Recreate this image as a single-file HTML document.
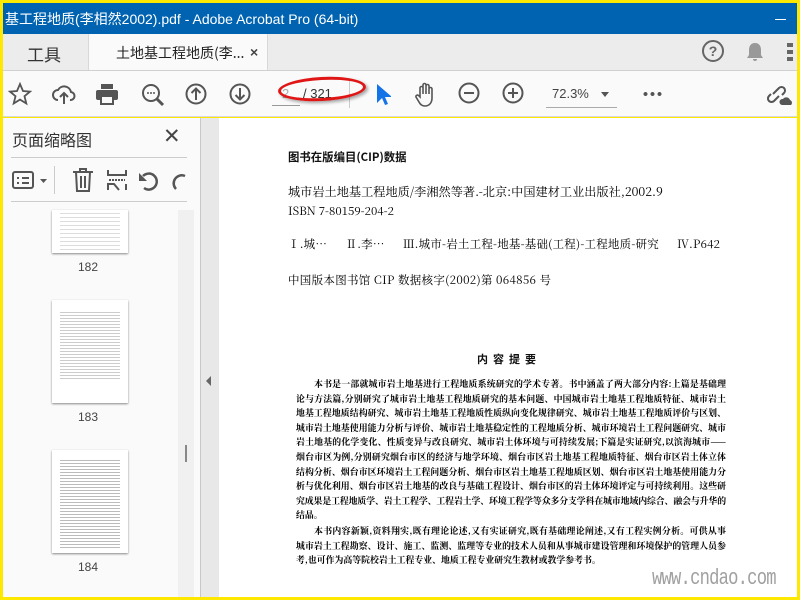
<!DOCTYPE html><html><head><meta charset="utf-8"><style>
*{margin:0;padding:0;box-sizing:border-box}
body{width:800px;height:600px;overflow:hidden;background:#ffe800;position:relative;font-family:"Liberation Sans","Noto Sans CJK SC",sans-serif}
.a{position:absolute}
.t{font-family:"Noto Sans CJK SC",sans-serif}
.p{font-family:"Noto Serif CJK SC","Noto Sans CJK SC",serif;color:#000}
.b div{height:14.6px;line-height:14.6px;white-space:nowrap;text-align:justify;text-align-last:justify}
.b div.l{text-align-last:left}
svg{position:absolute}
</style></head><body>
<div class="a" style="left:3px;top:3px;width:794px;height:31px;background:#0063b1"></div>
<div class="a" style="left:5px;top:9px;color:#fff;font-size:14px;white-space:nowrap">基工程地质(李相然2002).pdf - Adobe Acrobat Pro (64-bit)</div>
<div class="a" style="left:775px;top:19px;width:11px;height:1px;background:#fff"></div>
<div class="a" style="left:3px;top:34px;width:794px;height:36px;background:#ececec"></div>
<div class="a t" style="left:27px;top:41px;font-size:17px;color:#333">工具</div>
<div class="a" style="left:88px;top:34px;width:180px;height:37px;background:#fafafa;border-left:1px solid #d8d8d8;border-right:1px solid #d8d8d8"></div>
<div class="a t" style="left:116px;top:43px;font-size:14px;color:#222">土地基工程地质(李...</div>
<div class="a" style="left:250px;top:44px;font-size:14px;color:#444;font-weight:bold">×</div>
<svg style="left:702px;top:40px" width="22" height="22"><circle cx="11" cy="11" r="10" fill="none" stroke="#666" stroke-width="2"/><text x="11" y="16" font-size="14" text-anchor="middle" fill="#666" font-weight="bold" font-family="Liberation Sans">?</text></svg>
<svg style="left:745px;top:42px" width="20" height="20"><path d="M10 1c-4 0-6 3-6 7v5l-2 3h16l-2-3V8c0-4-2-7-6-7zM8 17h4a2 2 0 0 1-4 0z" fill="#999"/></svg>
<div class="a" style="left:787px;top:43px;width:6px;height:18px;background:repeating-linear-gradient(#666 0 4px,transparent 4px 7px)"></div>
<div class="a" style="left:3px;top:70px;width:794px;height:47px;background:#fafafa;border-top:1px solid #d0d0d0;border-bottom:1px solid #d8d8d8"></div>
<svg style="left:8px;top:82px" width="24" height="24"><path d="M12 2l3 7 7 .6-5.5 4.6 1.8 7.3L12 17.6 5.7 21.5l1.8-7.3L2 9.6 9 9z" fill="none" stroke="#555" stroke-width="1.8"/></svg>
<svg style="left:52px;top:84px" width="24" height="22"><path d="M6 16a5 5 0 0 1 0-10 7 7 0 0 1 13 2 4 4 0 0 1-1 8" fill="none" stroke="#555" stroke-width="2"/><path d="M12 20V10M8 13l4-4 4 4" fill="none" stroke="#555" stroke-width="2"/></svg>
<svg style="left:95px;top:83px" width="24" height="22"><rect x="6" y="1" width="12" height="5" fill="#555"/><rect x="1" y="7" width="22" height="10" rx="2" fill="#555"/><rect x="6" y="13" width="12" height="8" fill="#fafafa" stroke="#555" stroke-width="2"/></svg>
<svg style="left:141px;top:83px" width="24" height="24"><circle cx="10" cy="10" r="8" fill="none" stroke="#555" stroke-width="2"/><path d="M16 16l6 6" stroke="#555" stroke-width="3"/><circle cx="7" cy="10" r="1" fill="#555"/><circle cx="10" cy="10" r="1" fill="#555"/><circle cx="13" cy="10" r="1" fill="#555"/></svg>
<svg style="left:185px;top:83px" width="22" height="22"><circle cx="11" cy="11" r="9.5" fill="none" stroke="#555" stroke-width="2"/><path d="M11 17V6M6.5 10L11 5.5 15.5 10" fill="none" stroke="#555" stroke-width="2"/></svg>
<svg style="left:229px;top:83px" width="22" height="22"><circle cx="11" cy="11" r="9.5" fill="none" stroke="#555" stroke-width="2"/><path d="M11 5v11M6.5 12L11 16.5 15.5 12" fill="none" stroke="#555" stroke-width="2"/></svg>
<div class="a" style="left:272px;top:105px;width:28px;height:1px;background:#999"></div>
<div class="a" style="left:282px;top:86px;font-size:13px;color:#aaa">2</div>
<div class="a" style="left:303px;top:86px;font-size:13px;color:#333">/ 321</div>
<div class="a" style="left:349px;top:80px;width:1px;height:28px;background:#ccc"></div>
<div class="a" style="left:278px;top:77px;width:88px;height:24px;border:3px solid #e01515;border-radius:50%;transform:rotate(-3deg);box-shadow:2px 2px 3px rgba(0,0,0,.35)"></div>
<svg style="left:375px;top:83px" width="16" height="24"><path d="M2 1v19l5-5 3 7 3-1-3-7h7z" fill="#1473e6"/></svg>
<svg style="left:414px;top:82px" width="24" height="26"><path d="M6 15V6a1.5 1.5 0 0 1 3 0v6V3a1.5 1.5 0 0 1 3 0v9V4a1.5 1.5 0 0 1 3 0v8V7a1.5 1.5 0 0 1 3 0v9c0 5-3 8-7 8-3 0-5-2-6-4l-3-5a1.5 1.5 0 0 1 2.5-1.5z" fill="none" stroke="#555" stroke-width="1.6"/></svg>
<svg style="left:458px;top:82px" width="22" height="22"><circle cx="11" cy="11" r="9.5" fill="none" stroke="#555" stroke-width="2"/><path d="M6 11h10" stroke="#555" stroke-width="2"/></svg>
<svg style="left:502px;top:82px" width="22" height="22"><circle cx="11" cy="11" r="9.5" fill="none" stroke="#555" stroke-width="2"/><path d="M6 11h10M11 6v10" stroke="#555" stroke-width="2"/></svg>
<div class="a" style="left:552px;top:86px;font-size:13px;color:#444">72.3%</div>
<div class="a" style="left:601px;top:92px;border:4px solid transparent;border-top:5px solid #555"></div>
<div class="a" style="left:546px;top:107px;width:71px;height:1px;background:#aaa"></div>
<div class="a" style="left:642px;top:92px;width:20px;height:4px;background:radial-gradient(circle,#555 1.8px,transparent 2.2px) 0 0/7px 4px"></div>
<svg style="left:767px;top:82px" width="28" height="24"><path d="M6 12l6-6a3.5 3.5 0 0 1 5 5l-2 2M12 14l-5 5a3.5 3.5 0 0 1-5-5l2-2" fill="none" stroke="#555" stroke-width="2"/><path d="M15 23a3 3 0 0 1 1-6 4 4 0 0 1 7 1 3 3 0 0 1 1 5z" fill="#555"/></svg>
<!-- left panel -->
<div class="a" style="left:3px;top:118px;width:197px;height:479px;background:#fafafa"></div>
<div class="a t" style="left:12px;top:127px;font-size:16px;color:#333">页面缩略图</div>
<div class="a" style="left:163px;top:124px;font-size:21px;color:#444">✕</div>
<div class="a" style="left:11px;top:157px;width:176px;height:1px;background:#ccc"></div>
<div class="a" style="left:11px;top:201px;width:176px;height:1px;background:#ccc"></div>
<svg style="left:12px;top:171px" width="36" height="20"><rect x="1" y="1" width="20" height="16" rx="2" fill="none" stroke="#555" stroke-width="2"/><path d="M5 7h2M10 7h7M5 12h2M10 12h7" stroke="#555" stroke-width="2"/><path d="M28 8h7l-3.5 4z" fill="#555"/></svg>
<div class="a" style="left:54px;top:166px;width:1px;height:28px;background:#ccc"></div>
<svg style="left:72px;top:168px" width="22" height="24"><path d="M1 4h20M8 4V1h6v3M4 4l1 19h12l1-19M9 8v12M13 8v12" fill="none" stroke="#555" stroke-width="2"/></svg>
<svg style="left:106px;top:170px" width="22" height="22"><path d="M2 0v5h18V0M2 20v-6h6l5 6M20 14v6" fill="none" stroke="#555" stroke-width="2"/><path d="M3 10h16" stroke="#555" stroke-width="2" stroke-dasharray="2 1"/></svg>
<svg style="left:138px;top:170px" width="24" height="22"><path d="M6 18a8 8 0 1 0-1-12" fill="none" stroke="#555" stroke-width="2.5"/><path d="M1 3v8h8z" fill="#555"/></svg>
<svg style="left:172px;top:170px" width="15" height="22"><path d="M13 6a8 8 0 0 0-10 3 8 8 0 0 0 1 10" fill="none" stroke="#555" stroke-width="2.5"/></svg>
<div class="a" style="left:178px;top:210px;width:16px;height:387px;background:#f0f0f0"></div>
<div class="a" style="left:185px;top:445px;width:2px;height:17px;background:#888"></div>
<div class="a" style="left:52px;top:210px;width:76px;height:43px;background:#fff;box-shadow:0 1px 2px #888;background-image:repeating-linear-gradient(transparent 0 3px,#ddd 3px 4px);background-size:60px 100%;background-repeat:no-repeat;background-position:8px 0"></div>
<div class="a" style="left:78px;top:260px;font-size:12px;color:#444">182</div>
<div class="a" style="left:52px;top:300px;width:76px;height:103px;background:#fff;box-shadow:0 1px 2px #888;background-image:repeating-linear-gradient(transparent 0 2px,#ccc 2px 3px);background-size:60px 70px;background-repeat:no-repeat;background-position:8px 10px"></div>
<div class="a" style="left:78px;top:410px;font-size:12px;color:#444">183</div>
<div class="a" style="left:52px;top:450px;width:76px;height:103px;background:#fff;box-shadow:0 1px 2px #888;background-image:repeating-linear-gradient(transparent 0 2px,#bbb 2px 3px);background-size:60px 90px;background-repeat:no-repeat;background-position:8px 8px"></div>
<div class="a" style="left:78px;top:560px;font-size:12px;color:#444">184</div>
<div class="a" style="left:200px;top:118px;width:1px;height:479px;background:#c8c8c8"></div>
<div class="a" style="left:201px;top:118px;width:18px;height:479px;background:#e8e8e8"></div>
<div class="a" style="left:206px;top:376px;border:5px solid transparent;border-right:5px solid #666;border-left:0"></div>
<div class="a" style="left:219px;top:118px;width:578px;height:479px;background:#fff"></div>
<!-- page -->
<div class="a t" style="left:288px;top:149px;font-size:11.4px;font-weight:bold;color:#111">图书在版编目(CIP)数据</div>
<div class="a p" style="left:288px;top:183px;font-size:12.2px;white-space:nowrap">城市岩土地基工程地质/李湘然等著.-北京:中国建材工业出版社,2002.9</div>
<div class="a p" style="left:288px;top:203px;font-size:11.5px">ISBN 7-80159-204-2</div>
<div class="a p" style="left:288px;top:236px;font-size:11.5px;white-space:nowrap;word-spacing:3px;letter-spacing:.2px">Ⅰ.城…&nbsp;&nbsp;&nbsp;Ⅱ.李…&nbsp;&nbsp;&nbsp;Ⅲ.城市-岩土工程-地基-基础(工程)-工程地质-研究&nbsp;&nbsp;&nbsp;Ⅳ.P642</div>
<div class="a p" style="left:288px;top:272px;font-size:11.5px;white-space:nowrap;letter-spacing:.3px">中国版本图书馆 CIP 数据核字(2002)第 064856 号</div>
<div class="a t" style="left:477px;top:351px;font-size:11px;font-weight:bold;letter-spacing:5px;color:#111">内容提要</div>
<div class="a p b" style="left:296px;top:377px;width:430px;font-size:8.9px;font-weight:bold">
<div style="padding-left:18px">本书是一部就城市岩土地基进行工程地质系统研究的学术专著。书中涵盖了两大部分内容:上篇是基础理</div>
<div>论与方法篇,分别研究了城市岩土地基工程地质研究的基本问题、中国城市岩土地基工程地质特征、城市岩土</div>
<div>地基工程地质结构研究、城市岩土地基工程地质性质纵向变化规律研究、城市岩土地基工程地质评价与区划、</div>
<div>城市岩土地基使用能力分析与评价、城市岩土地基稳定性的工程地质分析、城市环境岩土工程问题研究、城市</div>
<div>岩土地基的化学变化、性质变异与改良研究、城市岩土体环境与可持续发展;下篇是实证研究,以滨海城市——</div>
<div>烟台市区为例,分别研究烟台市区的经济与地学环境、烟台市区岩土地基工程地质特征、烟台市区岩土体立体</div>
<div>结构分析、烟台市区环境岩土工程问题分析、烟台市区岩土地基工程地质区划、烟台市区岩土地基使用能力分</div>
<div>析与优化利用、烟台市区岩土地基的改良与基础工程设计、烟台市区的岩土体环境评定与可持续利用。这些研</div>
<div style="letter-spacing:-.1px">究成果是工程地质学、岩土工程学、工程岩土学、环境工程学等众多分支学科在城市地域内综合、融会与升华的</div>
<div class="l">结晶。</div>
<div style="padding-left:18px;margin-top:1px">本书内容新颖,资料翔实,既有理论论述,又有实证研究,既有基础理论阐述,又有工程实例分析。可供从事</div>
<div>城市岩土工程勘察、设计、施工、监测、监理等专业的技术人员和从事城市建设管理和环境保护的管理人员参</div>
<div class="l">考,也可作为高等院校岩土工程专业、地质工程专业研究生教材或教学参考书。</div>
</div>
<div class="a" style="left:652px;top:566px;font-size:22px;color:#a0a0a0;font-family:'Liberation Mono',monospace;letter-spacing:-1px;transform:scaleX(.78);transform-origin:left">www.cndao.com</div>
</body></html>
